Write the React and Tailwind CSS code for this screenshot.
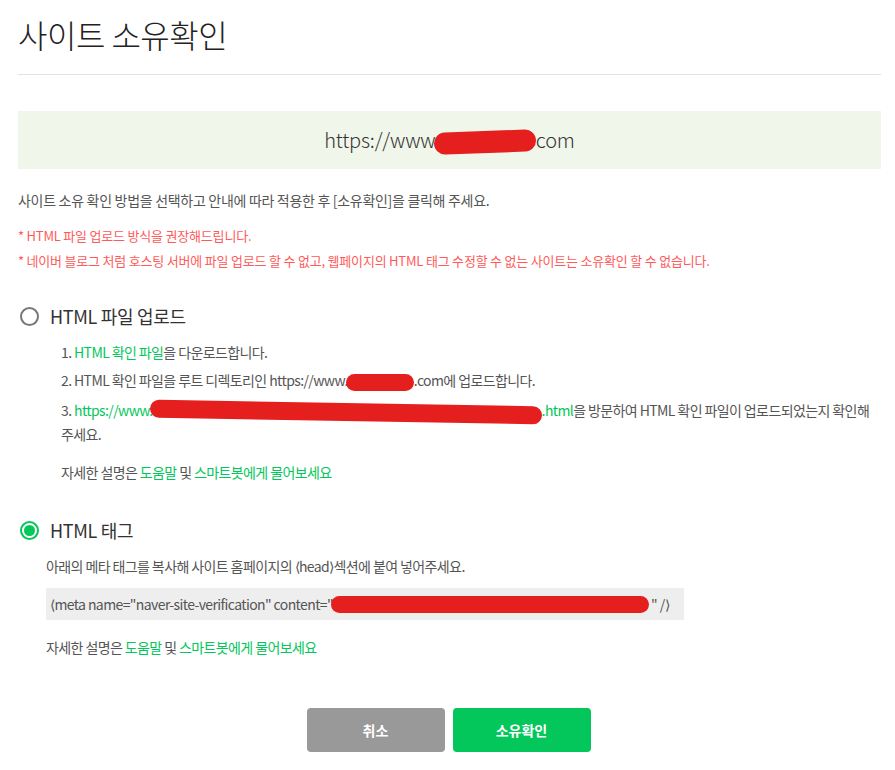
import React from "react";

const Blob = ({ w, h = 16, className = "" }) => (
  <span
    className={`inline-block align-middle bg-[#e51e1e] rounded-full ${className}`}
    style={{ width: w, height: h }}
  />
);

const G = ({ children }) => <span className="text-[#03c75a]">{children}</span>;

export default function App() {
  return (
    <div
      className="w-[895px] h-[770px] bg-white text-[#333] overflow-hidden"
      style={{ fontFamily: '"Noto Sans CJK KR", "Noto Sans", sans-serif' }}
    >
      <div className="pl-[18px] pr-[14px]">
        <h1 className="pt-[11px] text-[32px] leading-[46px] font-light text-[#222] tracking-[-0.5px]">
          사이트 소유확인
        </h1>
        <div className="mt-[17px] border-t border-[#e3e3e3]" />

        <div className="mt-[36px] h-[58px] bg-[#f0f6e9] flex items-center justify-center text-[20px] font-light text-[#333] tracking-[-0.2px]">
          <span>https://www.</span>
          <Blob w={102} h={22} className="-ml-[6px] mt-[4px] rotate-[-2deg]" />
          <span>com</span>
        </div>

        <p className="mt-[21px] text-[14px] leading-[20px] text-[#555] tracking-[-0.3px]">
          사이트 소유 확인 방법을 선택하고 안내에 따라 적용한 후 [소유확인]을 클릭해 주세요.
        </p>
        <p className="mt-[17px] text-[13px] leading-[18px] text-[#ff5a5a] tracking-[-0.2px]">
          * HTML 파일 업로드 방식을 권장해드립니다.
        </p>
        <p className="mt-[7px] text-[13px] leading-[18px] text-[#ff5a5a] tracking-[-0.2px]">
          * 네이버 블로그 처럼 호스팅 서버에 파일 업로드 할 수 없고, 웹페이지의 HTML 태그 수정할 수 없는 사이트는 소유확인 할 수 없습니다.
        </p>

        {/* HTML file upload */}
        <div className="mt-[33px] flex items-center gap-[11px] pl-[2px]">
          <span className="w-[19px] h-[19px] rounded-full border-2 border-[#777] bg-white" />
          <span className="text-[18px] leading-[26px] text-[#333] tracking-[-0.3px]">HTML 파일 업로드</span>
        </div>
        <div className="pl-[43px] mt-[9px] text-[14px] leading-[28px] text-[#555] tracking-[-0.6px]">
          <p>
            1. <G>HTML 확인 파일</G>을 다운로드합니다.
          </p>
          <p>
            2. HTML 확인 파일을 루트 디렉토리인 https://www.
            <Blob w={68} h={17} className="-ml-[2px]" />
            .com에 업로드합니다.
          </p>
          <p className="leading-[24px] pt-[4px]">
            3. <G>https://www.</G>
            <Blob w={392} h={18} className="-ml-[3px] rotate-[1deg]" />
            <G>.html</G>을 방문하여 HTML 확인 파일이 업로드되었는지 확인해 주세요.
          </p>
          <p className="mt-[12px]">
            자세한 설명은 <G>도움말</G> 및 <G>스마트봇에게 물어보세요</G>
          </p>
        </div>

        {/* HTML tag */}
        <div className="mt-[31px] flex items-center gap-[11px] pl-[2px]">
          <span className="w-[19px] h-[19px] rounded-full border-2 border-[#03c75a] bg-white flex items-center justify-center">
            <span className="w-[11px] h-[11px] rounded-full bg-[#03c75a]" />
          </span>
          <span className="text-[18px] leading-[26px] text-[#333] tracking-[-0.3px]">HTML 태그</span>
        </div>
        <div className="pl-[28px] mt-[13px] text-[14px] text-[#555] tracking-[-0.6px]">
          <p className="leading-[20px]">아래의 메타 태그를 복사해 사이트 홈페이지의 ⟨head⟩섹션에 붙여 넣어주세요.</p>
          <div className="mt-[12px] w-[638px] h-[32px] bg-[#eeeeee] flex items-center pl-[4px]">
            <span>⟨meta name="naver-site-verification" content="</span>
            <Blob w={318} h={17} className="-ml-[2px]" />
            <span className="ml-[2px]">" /⟩</span>
          </div>
          <p className="mt-[17px] leading-[20px]">
            자세한 설명은 <G>도움말</G> 및 <G>스마트봇에게 물어보세요</G>
          </p>
        </div>

        <div className="mt-[51px] flex justify-center gap-[8px] pr-[2px]">
          <button className="w-[138px] h-[44px] rounded-[4px] bg-[#999999] text-white text-[14px] font-bold">
            취소
          </button>
          <button className="w-[138px] h-[44px] rounded-[4px] bg-[#03c75a] text-white text-[14px] font-bold">
            소유확인
          </button>
        </div>
      </div>
    </div>
  );
}
